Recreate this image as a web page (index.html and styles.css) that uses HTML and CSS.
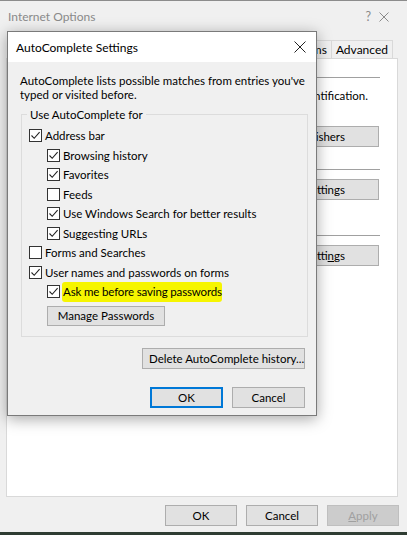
FILE: index.html
```html
<!DOCTYPE html>
<html lang="en">
<head>
    <meta charset="UTF-8">
    <title>Internet Options - AutoComplete Settings</title>
    <link rel="stylesheet" href="styles.css">
</head>
<body>
    <!-- Parent window: Internet Options -->
    <div class="window">
        <div class="win-title">
            <span class="win-caption">Internet Options</span>
            <span class="win-help">?</span>
            <svg class="win-close" width="10" height="10" viewBox="0 0 10 10">
                <path d="M0.5 0.5 L9.5 9.5 M9.5 0.5 L0.5 9.5" stroke="#8a8a8a" stroke-width="1"/>
            </svg>
        </div>

        <div class="tabs">
            <div class="tab">Programs</div>
            <div class="tab">Advanced</div>
        </div>

        <div class="panel">
            <div class="section-head"><span>Certificates</span></div>
            <p class="section-text">Use certificates for encrypted connections and identification.</p>
            <div class="section-buttons">
                <button class="btn">Clear SSL state</button>
                <button class="btn">Certificates</button>
                <button class="btn">Publishers</button>
            </div>

            <div class="section-head second"><span>AutoComplete</span></div>
            <div class="section-buttons tight">
                <button class="btn">Settings</button>
            </div>

            <div class="section-head third"><span>Feeds and Web Slices</span></div>
            <div class="section-buttons tight">
                <button class="btn">Setti<u>n</u>gs</button>
            </div>
        </div>

        <div class="footer">
            <button class="btn">OK</button>
            <button class="btn">Cancel</button>
            <button class="btn" disabled><u>A</u>pply</button>
        </div>
        <div class="desktop"></div>
    </div>

    <!-- Modal dialog on top -->
    <div class="dialog">
        <div class="dlg-title">
            <span>AutoComplete Settings</span>
            <svg class="dlg-close" width="12" height="12" viewBox="0 0 12 12">
                <path d="M0.5 0.5 L11.5 11.5 M11.5 0.5 L0.5 11.5" stroke="#222" stroke-width="1"/>
            </svg>
        </div>

        <div class="dlg-body">
            <p class="intro">AutoComplete lists possible matches from entries you've<br>typed or visited before.</p>

            <div class="group">
                <div class="legend">Use AutoComplete for</div>
                <div class="check-row"><span class="box checked"></span>Address bar</div>
                <div class="check-row sub"><span class="box checked"></span>Browsing history</div>
                <div class="check-row sub"><span class="box checked"></span>Favorites</div>
                <div class="check-row sub"><span class="box"></span>Feeds</div>
                <div class="check-row sub"><span class="box checked"></span>Use Windows Search for better results</div>
                <div class="check-row sub"><span class="box checked"></span>Suggesting URLs</div>
                <div class="check-row"><span class="box"></span>Forms and Searches</div>
                <div class="check-row"><span class="box checked"></span>User names and passwords on forms</div>
                <div class="check-row sub"><span class="box checked"></span><span class="marker">Ask me before saving passwords</span></div>
                <button class="btn manage">Manage Passwords</button>
            </div>

            <div class="delete-row">
                <button class="btn wide">Delete AutoComplete history...</button>
            </div>

            <div class="dlg-buttons">
                <button class="btn default">OK</button>
                <button class="btn">Cancel</button>
            </div>
        </div>
    </div>
</body>
</html>
```

FILE: styles.css
```css
body {
    margin: 0;
    width: 407px;
    height: 535px;
    overflow: hidden;
    background: #f0f0f0;
    font-family: "Lato", "Open Sans", sans-serif;
    font-size: 11.5px;
    color: #000;
    position: relative;
}

/* Parent window */
.window {
    height: 535px;
    box-sizing: border-box;
    border-top: 1px solid #8c8c8c;
    display: flex;
    flex-direction: column;
}

.win-title {
    height: 31px;
    display: flex;
    align-items: center;
    padding-left: 8px;
}

.win-caption {
    color: #8a8a8a;
    font-size: 12px;
    flex: 1;
}

.win-help {
    color: #8a8a8a;
    font-size: 12.5px;
    margin-right: 8px;
}

.win-close {
    margin-right: 18px;
}

.tabs {
    margin-top: 8px;
    height: 18px;
    display: flex;
    justify-content: flex-end;
    padding-right: 14px;
}

.tab {
    border: 1px solid #d9d9d9;
    border-bottom: none;
    padding: 0 4px;
    line-height: 18px;
    font-size: 12px;
    background: #f0f0f0;
}

.tab + .tab {
    border-left: none;
}

.panel {
    margin: 0 9px 0 6px;
    height: 439px;
    box-sizing: border-box;
    background: #fff;
    border: 1px solid #d9d9d9;
    padding: 0 17px 0 12px;
}

.section-head {
    margin-top: 11px;
    display: flex;
    align-items: center;
    gap: 6px;
    height: 14px;
}

.section-head::after {
    content: "";
    flex: 1;
    border-top: 1px solid #a0a0a0;
}

.section-head.second {
    margin-top: 15px;
}

.section-head.third {
    margin-top: 28px;
}

.section-text {
    margin: 5px 0 0;
    text-align: right;
    padding-right: 12px;
    white-space: nowrap;
}

.section-buttons {
    margin-top: 24px;
    display: flex;
    justify-content: flex-end;
    gap: 8px;
    padding-right: 1px;
}

.section-buttons.tight {
    margin-top: 3px;
}

.btn {
    font-family: inherit;
    font-size: 11.5px;
    color: #000;
    background: #e1e1e1;
    border: 1px solid #adadad;
    height: 21px;
    padding: 0 6px;
    margin: 0;
    white-space: nowrap;
}

.section-buttons .btn {
    min-width: 63px;
    padding: 0 33px 0 10px;
}

.footer {
    margin-top: 8px;
    display: flex;
    justify-content: flex-end;
    gap: 9px;
    padding-right: 8px;
}

.footer .btn {
    width: 72px;
}

.btn[disabled] {
    background: #cccccc;
    border-color: #bfbfbf;
    color: #a0a0a0;
}

.desktop {
    margin-top: auto;
    height: 3px;
    background: #2f3d33;
}

/* Dialog */
.dialog {
    position: absolute;
    left: 7px;
    top: 31px;
    width: 310px;
    height: 385px;
    box-sizing: border-box;
    border: 1px solid #7a7a7a;
    background: #f0f0f0;
    box-shadow: 0 3px 14px rgba(0, 0, 0, 0.35);
    display: flex;
    flex-direction: column;
}

.dlg-title {
    height: 30px;
    background: #fff;
    display: flex;
    align-items: center;
    justify-content: space-between;
    padding: 0 10px 0 8px;
    font-size: 12px;
}

.dlg-body {
    padding: 12px 10px 0 12px;
}

.intro {
    margin: 0;
    line-height: 13.5px;
    white-space: nowrap;
}

/* group box with caption sitting on its top border */
.group {
    margin: 13px 0 0 1px;
    padding: 11px 0 0 7px;
    border: 1px solid #dcdcdc;
    height: 223px;
    box-sizing: border-box;
    width: 287px;
    position: relative;
}

.legend {
    position: absolute;
    top: -8px;
    left: 5px;
    padding: 0 3px;
    background: #f0f0f0;
    line-height: 15px;
}

.check-row {
    height: 19.5px;
    display: flex;
    align-items: center;
    white-space: nowrap;
}

.check-row.sub {
    padding-left: 18px;
}

.box {
    width: 11px;
    height: 11px;
    border: 1px solid #333;
    background: #fff;
    margin-right: 3px;
    flex-shrink: 0;
}

.box.checked {
    background: #fff url("data:image/svg+xml,%3Csvg xmlns='http://www.w3.org/2000/svg' width='11' height='11'%3E%3Cpath d='M1.5 5.5 L4.2 8.3 L9.6 2.2' fill='none' stroke='%23222' stroke-width='1.1'/%3E%3C/svg%3E") no-repeat center;
}

.marker {
    background: #f6f500;
    padding: 3px 0 4px 1px;
    margin-left: -1px;
    border-radius: 3px;
    letter-spacing: -0.15px;
}

.manage {
    margin: 4px 0 0 18px;
    width: 118px;
    height: 20px;
}

.delete-row {
    margin-top: 11px;
    display: flex;
    justify-content: flex-end;
    padding-right: 1px;
}

.wide {
    width: 163px;
}

.dlg-buttons {
    margin-top: 18px;
    display: flex;
    justify-content: flex-end;
    gap: 9px;
    padding-right: 1px;
}

.dlg-buttons .btn {
    width: 73px;
    height: 21px;
}

.btn.default {
    border: 2px solid #0078d7;
}
```
